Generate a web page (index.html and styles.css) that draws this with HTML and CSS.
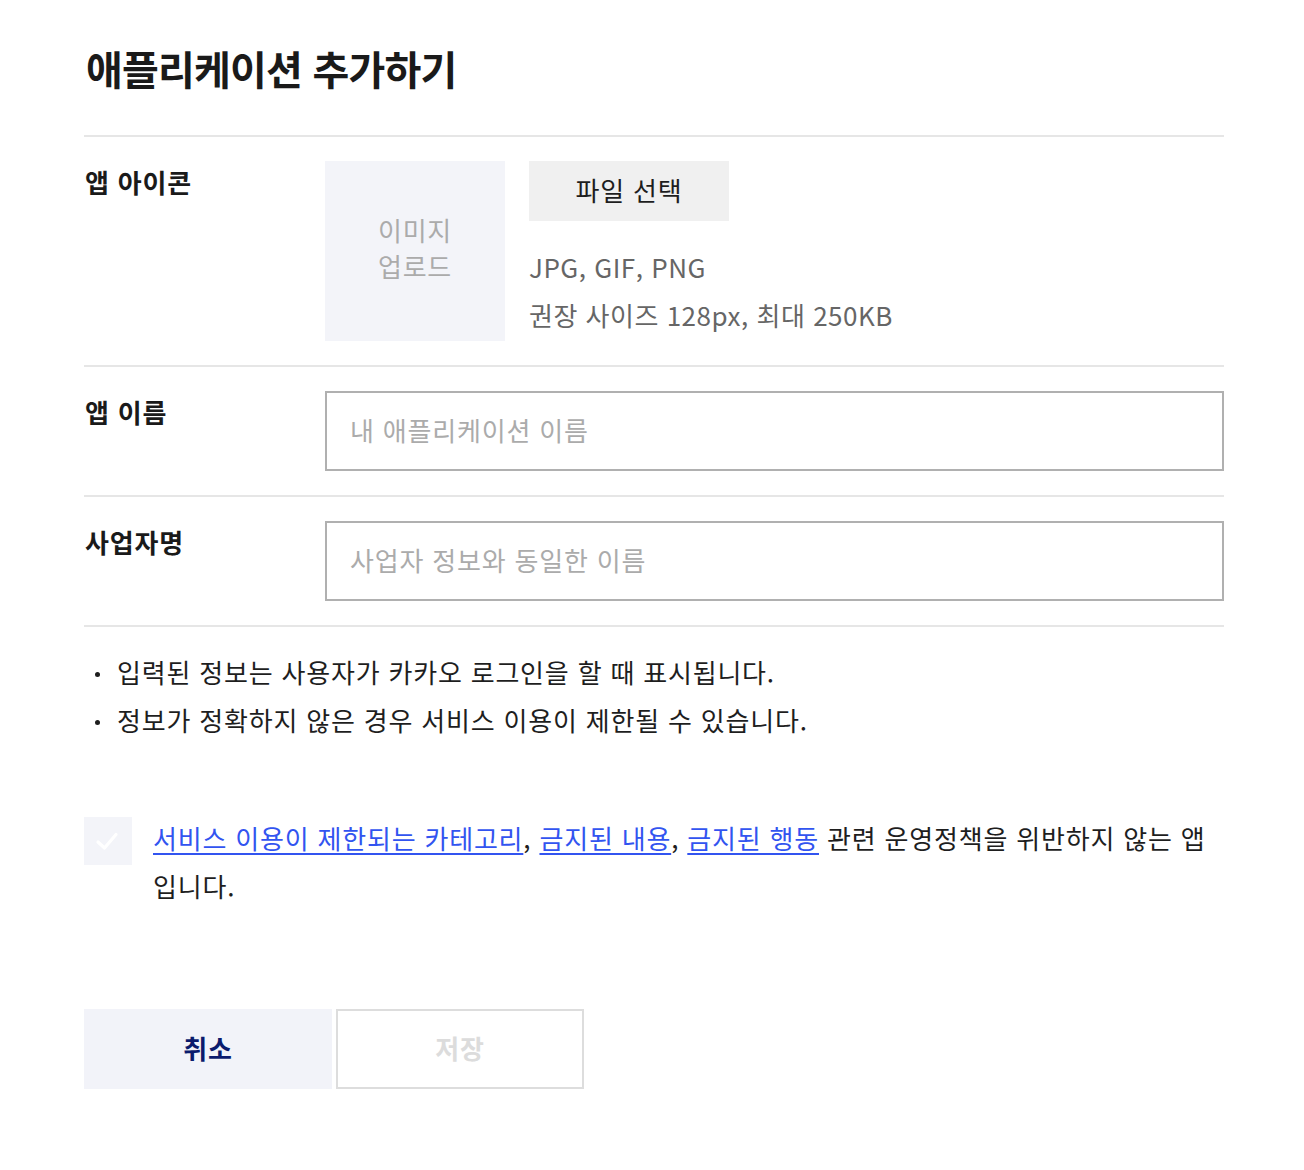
FILE: index.html
```html
<!DOCTYPE html>
<html lang="ko">
<head>
    <meta charset="UTF-8">
    <title>애플리케이션 추가하기</title>
    <meta name="viewport" content="width=device-width, initial-scale=1.0">
    <link rel="stylesheet" href="styles.css">
</head>
<body>
    <div class="page">
        <div class="header">
            <h1>애플리케이션 추가하기</h1>
        </div>

        <div class="row">
            <div class="label">앱 아이콘</div>
            <div class="field icon-field">
                <div class="icon-box">이미지<br>업로드</div>
                <div class="icon-info">
                    <button class="file-btn" type="button">파일 선택</button>
                    <p class="hint">JPG, GIF, PNG<br>권장 사이즈 128px, 최대 250KB</p>
                </div>
            </div>
        </div>

        <div class="row">
            <label class="label" for="app-name">앱 이름</label>
            <div class="field">
                <input id="app-name" class="text-input" type="text" placeholder="내 애플리케이션 이름">
            </div>
        </div>

        <div class="row">
            <label class="label" for="company">사업자명</label>
            <div class="field">
                <input id="company" class="text-input" type="text" placeholder="사업자 정보와 동일한 이름">
            </div>
        </div>

        <ul class="notes">
            <li>입력된 정보는 사용자가 카카오 로그인을 할 때 표시됩니다.</li>
            <li>정보가 정확하지 않은 경우 서비스 이용이 제한될 수 있습니다.</li>
        </ul>

        <div class="agree">
            <span class="check">
                <svg width="48" height="48" viewBox="0 0 48 48">
                    <path d="M14 25 L20.5 31 L32 17.5" fill="none" stroke="#fff" stroke-width="3.2" stroke-linecap="round" stroke-linejoin="round"/>
                </svg>
            </span>
            <p class="agree-text"><a href="#">서비스 이용이 제한되는 카테고리</a>, <a href="#">금지된 내용</a>, <a href="#">금지된 행동</a> 관련 운영정책을 위반하지 않는 앱입니다.</p>
        </div>

        <div class="actions">
            <button class="btn btn-cancel" type="button">취소</button>
            <button class="btn btn-save" type="button" disabled>저장</button>
        </div>
    </div>
</body>
</html>
```

FILE: styles.css
```css
body {
    margin: 0;
    font-family: "Noto Sans CJK KR", "Noto Sans", sans-serif;
    font-size: 26px;
    letter-spacing: 0.8px;
    color: #1e1e1e;
    background-color: #fff;
}
.page {
    width: 1140px;
    margin-left: 84px;
    padding-top: 38px;
}
.header {
    padding-bottom: 37px;
    border-bottom: 2px solid #e6e6e6;
}
h1 {
    margin: 0;
    font-size: 40px;
    line-height: 60px;
    font-weight: 700;
    letter-spacing: -0.8px;
    color: #1a1a1a;
    padding-left: 2px;
}
.row {
    display: flex;
    padding: 24px 0;
    border-bottom: 2px solid #e6e6e6;
}
.label {
    width: 240px;
    flex-shrink: 0;
    line-height: 42px;
    font-weight: 700;
    color: #1a1a1a;
    padding-left: 1px;
}
.field {
    flex: 1;
}
.icon-field {
    display: flex;
    gap: 24px;
}
.icon-box {
    width: 180px;
    height: 180px;
    box-sizing: border-box;
    background-color: #f3f4f9;
    color: #ababab;
    line-height: 36px;
    text-align: center;
    display: flex;
    align-items: center;
    justify-content: center;
    padding-bottom: 7px;
}
.file-btn {
    display: block;
    width: 200px;
    height: 60px;
    border: none;
    background-color: #f0f0f0;
    color: #1e1e1e;
    font-family: inherit;
    font-size: 26px;
    letter-spacing: 0.8px;
    padding: 0 0 4px;
    cursor: pointer;
}
.hint {
    margin: 22px 0 0;
    color: #666;
    line-height: 48px;
    letter-spacing: 0.5px;
}
.text-input {
    display: block;
    width: 100%;
    height: 80px;
    box-sizing: border-box;
    border: 2px solid #b0b0b0;
    border-radius: 0;
    padding: 0 23px 4px;
    font-family: inherit;
    font-size: 26px;
    letter-spacing: 0.8px;
    color: #1e1e1e;
    outline: none;
}
.text-input::placeholder {
    color: #ababab;
}
.notes {
    list-style: none;
    margin: 0;
    padding: 21px 0 0 33px;
}
.notes li {
    position: relative;
    line-height: 48px;
}
.notes li::before {
    content: "";
    position: absolute;
    left: -22px;
    top: 24px;
    width: 5px;
    height: 5px;
    border-radius: 50%;
    background-color: #1e1e1e;
}
.agree {
    display: flex;
    gap: 21px;
    margin-top: 70px;
}
.check {
    width: 48px;
    height: 48px;
    flex-shrink: 0;
    margin-top: 3px;
    background-color: #f3f4f9;
}
.check svg {
    display: block;
}
.agree-text {
    margin: 0;
    line-height: 48px;
}
.agree-text a {
    color: #3254f0;
    text-decoration: underline;
    text-underline-offset: 4px;
    text-decoration-thickness: 2px;
}
.actions {
    display: flex;
    gap: 4px;
    margin-top: 99px;
}
.btn {
    width: 248px;
    height: 80px;
    box-sizing: border-box;
    font-family: inherit;
    font-size: 26px;
    letter-spacing: 0.8px;
    font-weight: 700;
    padding: 0 0 4px;
    cursor: pointer;
}
.btn-cancel {
    border: none;
    background-color: #f2f3f9;
    color: #0b1b6d;
}
.btn-save {
    border: 2px solid #dddddd;
    background-color: #fff;
    color: #dcdcdc;
}
```
